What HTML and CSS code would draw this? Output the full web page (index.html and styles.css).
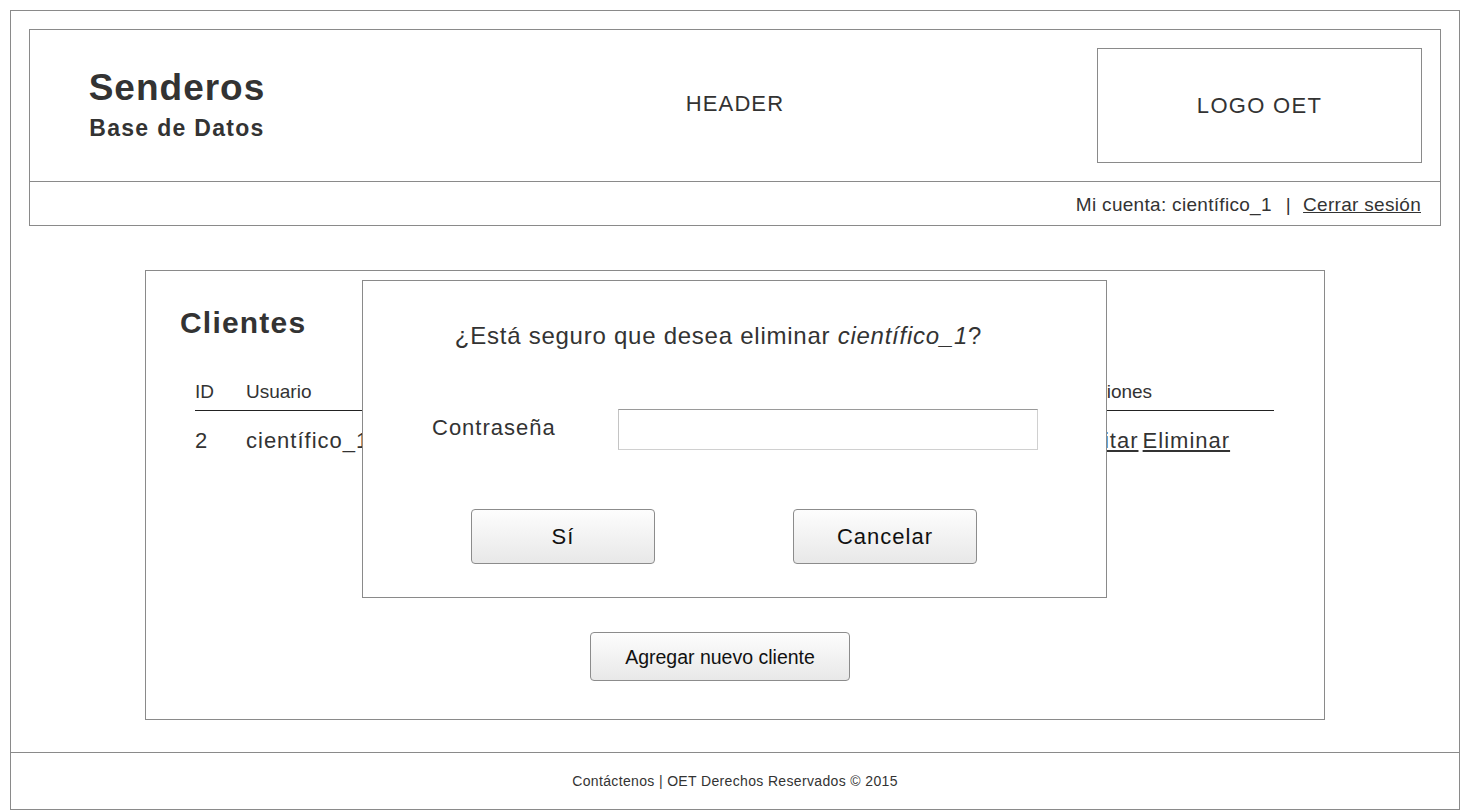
FILE: index.html
```html
<!DOCTYPE html>
<html lang="es">
<head>
<meta charset="utf-8">
<title>Senderos - Clientes</title>
<link rel="stylesheet" href="styles.css">
</head>
<body>
<div class="frame">
  <div class="header">
    <div class="header-top">
      <div class="brand">
        <div class="brand-title">Senderos</div>
        <div class="brand-sub">Base de Datos</div>
      </div>
      <div class="header-label">HEADER</div>
      <div class="logo-side">
        <div class="logo">LOGO OET</div>
      </div>
    </div>
    <div class="header-bar">
      <span>Mi cuenta: científico_1</span><span class="sep">|</span><a href="#" class="link">Cerrar sesión</a>
    </div>
  </div>

  <div class="panel">
    <h1 class="panel-title">Clientes</h1>
    <table class="table">
      <colgroup>
        <col class="c-id"><col class="c-user"><col class="c-name"><col class="c-mail"><col class="c-act">
      </colgroup>
      <thead>
        <tr><th>ID</th><th>Usuario</th><th>Nombre</th><th>Correo</th><th>Acciones</th></tr>
      </thead>
      <tbody>
        <tr><td>2</td><td>científico_1</td><td>Científico Uno</td><td>cientifico1@oet.org</td><td class="actions"><a href="#" class="link">Editar</a> <a href="#" class="link">Eliminar</a></td></tr>
      </tbody>
    </table>
    <div class="add-row">
      <button class="btn btn-add">Agregar nuevo cliente</button>
    </div>
  </div>

  <div class="footer">Contáctenos | OET Derechos Reservados © 2015</div>

  <div class="modal">
    <p class="modal-question">¿Está seguro que desea eliminar <em>científico_1</em>?</p>
    <div class="modal-field">
      <label class="modal-label" for="pw">Contraseña</label>
      <input id="pw" class="modal-input" type="password">
    </div>
    <div class="modal-actions">
      <button class="btn btn-modal">Sí</button>
      <button class="btn btn-modal">Cancelar</button>
    </div>
  </div>
</div>
</body>
</html>
```

FILE: styles.css
```css
* { box-sizing: border-box; }

html, body {
  margin: 0;
  padding: 0;
  background: #ffffff;
}

body {
  font-family: "Liberation Sans", Arial, sans-serif;
  color: #333333;
}

.frame {
  position: relative;
  margin: 10px;
  width: 1450px;
  height: 800px;
  border: 1px solid #8a8a8a;
  display: flex;
  flex-direction: column;
}

/* Header */
.header {
  margin: 18px 18px 0;
  border: 1px solid #8a8a8a;
}

.header-top {
  height: 151px;
  display: grid;
  grid-template-columns: 1fr auto 1fr;
  align-items: center;
  padding: 0 18px;
}

.brand {
  align-self: start;
  display: flex;
  flex-direction: column;
  align-items: flex-start;
  padding-top: 38px;
}

.brand-title {
  margin-left: 38px;
  width: 182px;
  font-size: 37px;
  font-weight: bold;
  letter-spacing: 1px;
  line-height: 40px;
  text-align: center;
}

.brand-sub {
  margin: 7px 0 0 38px;
  width: 182px;
  font-size: 23px;
  font-weight: bold;
  letter-spacing: 1.3px;
  line-height: 26px;
  text-align: center;
}

.header-label {
  font-size: 22px;
  letter-spacing: 1.1px;
  margin-top: -4px;
}

.logo-side {
  display: flex;
  justify-content: flex-end;
}

.logo {
  width: 325px;
  height: 115px;
  border: 1px solid #8a8a8a;
  display: flex;
  align-items: center;
  justify-content: center;
  font-size: 22px;
  letter-spacing: 1.3px;
}

.header-bar {
  border-top: 1px solid #8a8a8a;
  height: 44px;
  display: flex;
  align-items: center;
  justify-content: flex-end;
  padding: 3px 19px 0 0;
  font-size: 19px;
  letter-spacing: 0.3px;
}

.sep {
  margin: 0 12px 0 14px;
}

.link {
  color: #333333;
  text-decoration: underline;
}

/* Panel */
.panel {
  margin: 44px auto 0;
  width: 1180px;
  height: 450px;
  border: 1px solid #8a8a8a;
  padding: 0 49px 0 34px;
}

.panel-title {
  margin: 35px 0 0;
  font-size: 30px;
  line-height: 34px;
  font-weight: bold;
  letter-spacing: 1.2px;
}

.table {
  margin: 40px 0 0 15px;
  width: 1079px;
  border-collapse: collapse;
  table-layout: fixed;
}

.c-id { width: 51px; }
.c-user { width: 300px; }
.c-name { width: 280px; }
.c-mail { width: 249px; }
.c-act { width: 199px; }

.table th {
  text-align: left;
  font-weight: normal;
  font-size: 19px;
  line-height: 24px;
  padding: 0 0 6px;
  border-bottom: 1px solid #222222;
}

.table td {
  font-size: 22px;
  line-height: 26px;
  padding: 17px 0 7px;
  letter-spacing: 1px;
  white-space: nowrap;
}

.table td.actions {
  word-spacing: -3px;
}

.add-row {
  margin-top: 171px;
  padding-left: 410px;
}

.btn {
  font-family: "Liberation Sans", Arial, sans-serif;
  color: #111111;
  background: linear-gradient(#fdfdfd, #e8e8e8);
  border: 1px solid #8c8c8c;
  border-radius: 4px;
  cursor: pointer;
}

.btn-add {
  width: 260px;
  height: 49px;
  font-size: 19.5px;
  padding: 2px 0 0;
}

/* Footer */
.footer {
  margin-top: auto;
  border-top: 1px solid #8a8a8a;
  height: 57px;
  display: flex;
  align-items: center;
  justify-content: center;
  font-size: 14px;
  letter-spacing: 0.35px;
}

/* Modal overlay */
.modal {
  position: absolute;
  left: 351px;
  top: 269px;
  width: 745px;
  height: 318px;
  background: #ffffff;
  border: 1px solid #8a8a8a;
}

.modal-question {
  margin: 41px 0 0;
  text-align: center;
  font-size: 24px;
  line-height: 28px;
  letter-spacing: 0.75px;
  padding-right: 32px;
}

.modal-question em {
  font-style: italic;
}

.modal-field {
  display: flex;
  align-items: center;
  margin-top: 59px;
  padding-left: 69px;
}

.modal-label {
  width: 186px;
  font-size: 22px;
  letter-spacing: 1px;
  padding-bottom: 3px;
}

.modal-input {
  width: 420px;
  height: 41px;
  border: 1px solid #d0d0d0;
  border-top-color: #9a9a9a;
  border-left-color: #c4c4c4;
  background: #ffffff;
  margin: 0;
  padding: 0 6px;
  font-size: 20px;
}

.modal-actions {
  display: flex;
  gap: 138px;
  margin-top: 59px;
  padding-left: 108px;
}

.btn-modal {
  width: 184px;
  height: 55px;
  font-size: 22px;
  letter-spacing: 1px;
  padding: 0;
}
```
